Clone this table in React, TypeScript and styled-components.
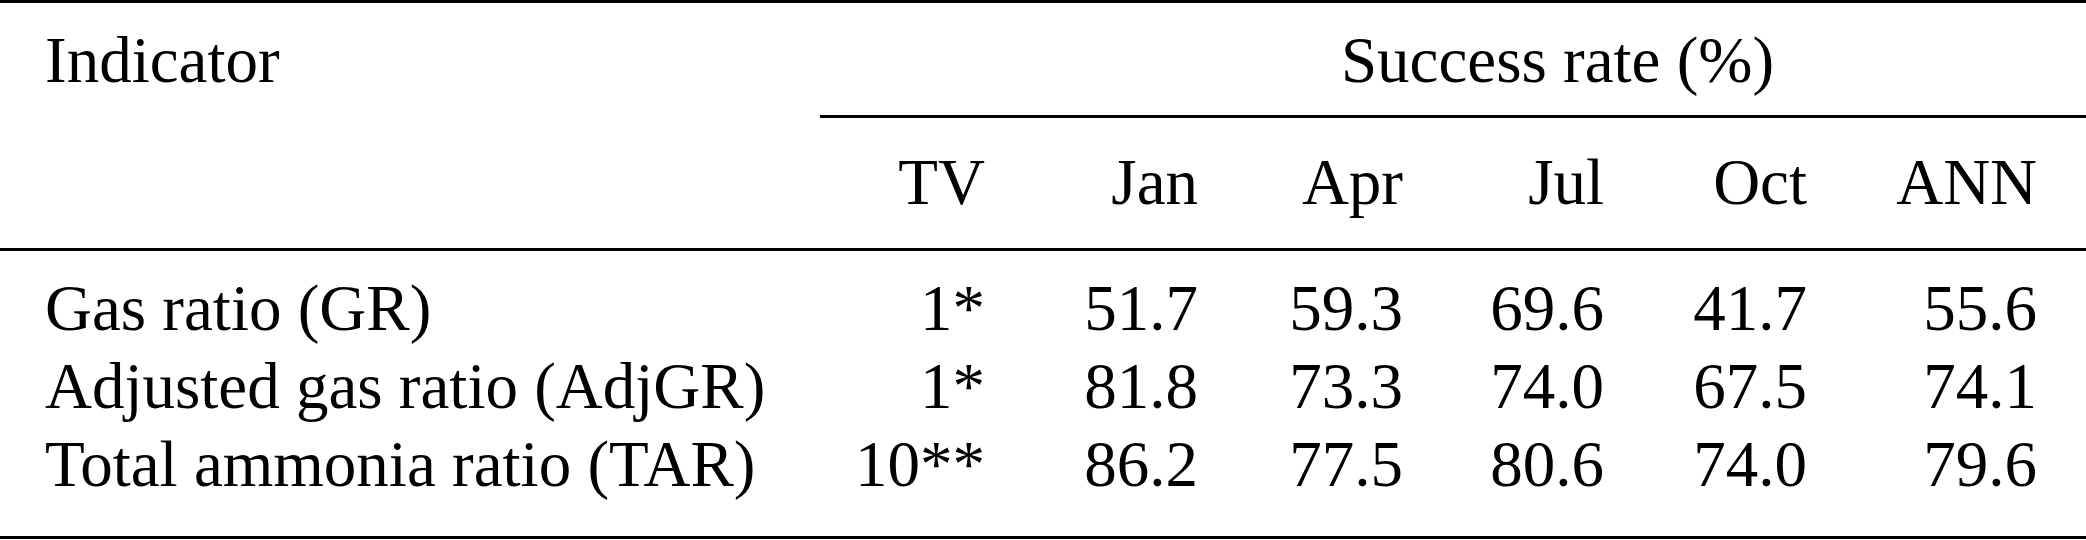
import { createGlobalStyle, styled } from "styled-components";

const GlobalStyle = createGlobalStyle`
  html, body {
    margin: 0;
    padding: 0;
    background: #ffffff;
  }
`;

const columns = ["TV", "Jan", "Apr", "Jul", "Oct", "ANN"];
const colWidths = [820, 209, 213, 205, 201, 203, 235];

const rows = [
  { name: "Gas ratio (GR)", values: ["1*", "51.7", "59.3", "69.6", "41.7", "55.6"] },
  { name: "Adjusted gas ratio (AdjGR)", values: ["1*", "81.8", "73.3", "74.0", "67.5", "74.1"] },
  { name: "Total ammonia ratio (TAR)", values: ["10**", "86.2", "77.5", "80.6", "74.0", "79.6"] },
];

function App() {
  return (
    <>
      <GlobalStyle />
      <Table>
        <colgroup>
          {colWidths.map((w, i) => (
            <col key={i} style={{ width: w }} />
          ))}
        </colgroup>
        <thead>
          <tr>
            <LabelCell $top={18} $bottom={16}>
              Indicator
            </LabelCell>
            <NumCell $top={18} $bottom={16} $rule />
            <GroupCell colSpan={5} $top={18} $bottom={16} $rule>
              Success rate (%)
            </GroupCell>
          </tr>
          <tr>
            <LabelCell $top={25} $bottom={27} $rule />
            {columns.map((c, i) => (
              <NumCell key={c} $top={25} $bottom={27} $rule $last={i === columns.length - 1}>
                {c}
              </NumCell>
            ))}
          </tr>
        </thead>
        <tbody>
          {rows.map((r, ri) => {
            const top = ri === 0 ? 18 : 0;
            const bottom = ri === rows.length - 1 ? 33 : 0;
            return (
              <tr key={r.name}>
                <LabelCell $top={top} $bottom={bottom}>
                  {r.name}
                </LabelCell>
                {r.values.map((v, i) => (
                  <NumCell key={i} $top={top} $bottom={bottom} $last={i === r.values.length - 1}>
                    {v}
                  </NumCell>
                ))}
              </tr>
            );
          })}
        </tbody>
      </Table>
    </>
  );
}

export default App;

const Table = styled.table`
  width: 2086px;
  table-layout: fixed;
  border-collapse: separate;
  border-spacing: 0;
  border-top: 3px solid #000;
  border-bottom: 3px solid #000;
  font-family: "Liberation Serif", "Times New Roman", serif;
  font-size: 65px;
  line-height: 78px;
  color: #000;
`;

type CellProps = { $top: number; $bottom: number; $rule?: boolean; $last?: boolean };

const BaseCell = styled.td<CellProps>`
  padding-top: ${({ $top }) => $top}px;
  padding-bottom: ${({ $bottom }) => $bottom}px;
  border-bottom: ${({ $rule }) => ($rule ? "3px solid #000" : "none")};
  white-space: nowrap;
  vertical-align: top;
  font-weight: 400;
`;

const LabelCell = styled(BaseCell)`
  text-align: left;
  padding-left: 45px;
  padding-right: 0;
`;

const NumCell = styled(BaseCell)`
  text-align: right;
  padding-left: 0;
  padding-right: ${({ $last }) => ($last ? 49 : 44)}px;
`;

const GroupCell = styled(BaseCell)`
  text-align: center;
  padding-left: 44px;
  padding-right: 44px;
`;
